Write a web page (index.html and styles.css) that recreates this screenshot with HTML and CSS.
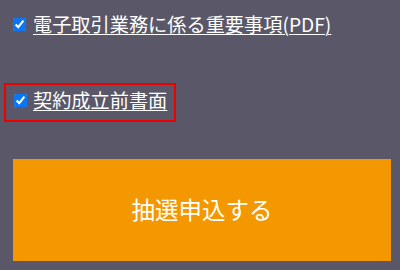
FILE: index.html
```html
<!DOCTYPE html>
<html lang="ja">
<head>
<meta charset="utf-8">
<link rel="stylesheet" href="styles.css">
</head>
<body>
<div class="page">
  <label class="row row-first">
    <input type="checkbox" class="check" checked>
    <a class="link" href="#">電子取引業務に係る重要事項(PDF)</a>
  </label>
  <div class="highlight">
    <label class="row row-boxed">
      <input type="checkbox" class="check" checked>
      <a class="link" href="#">契約成立前書面</a>
    </label>
  </div>
  <button class="submit" type="button">抽選申込する</button>
</div>
</body>
</html>
```
FILE: styles.css
```css
html, body {
  margin: 0;
  padding: 0;
  background: #5a5868;
}
body {
  width: 400px;
  height: 270px;
  overflow: hidden;
  font-family: "Noto Sans CJK JP", "Noto Sans", sans-serif;
}
.page {
  padding-top: 12px;
  display: flex;
  flex-direction: column;
  align-items: flex-start;
}
.row {
  display: flex;
  align-items: center;
  height: 25px;
  line-height: 25px;
}
.row-first {
  margin-left: 13px;
  gap: 7px;
}
.check {
  margin: 0;
  width: 13px;
  height: 13px;
  flex: none;
  accent-color: #0a75f5;
}
.link {
  color: #ffffff;
  font-size: 19.2px;
  text-decoration: underline;
  text-decoration-thickness: 1px;
  text-underline-offset: 2px;
}
.highlight {
  margin-top: 46px;
  margin-left: 4px;
  border: 2px solid #ee0000;
  padding: 3px 7px 7px 8px;
}
.row-boxed {
  gap: 6px;
}
.submit {
  margin-top: 37px;
  margin-left: 13px;
  width: 378px;
  height: 102px;
  border: none;
  border-radius: 0;
  background: #f39800;
  color: #ffffff;
  font-family: "Noto Sans CJK JP", "Noto Sans", sans-serif;
  font-size: 23.5px;
  padding: 0 0 3px 0;
}
```
